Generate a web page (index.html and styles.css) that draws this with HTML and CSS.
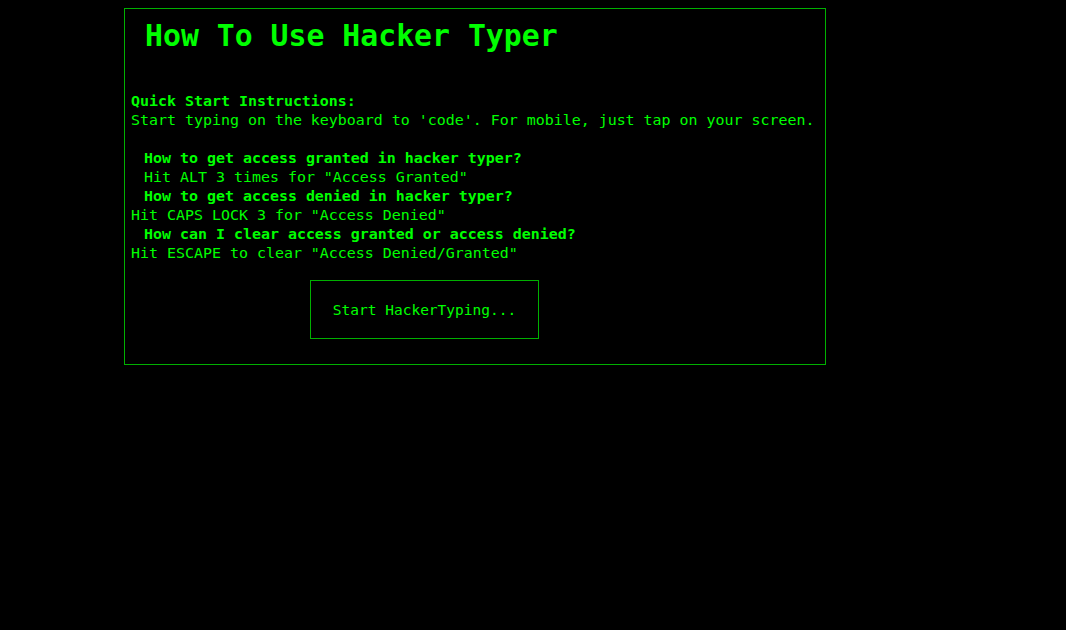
FILE: index.html
```html
<!DOCTYPE html>
<html>
<head>
<meta charset="utf-8">
<link rel="stylesheet" href="styles.css">
</head>
<body>
<div class="page">
  <div class="panel">
    <h1 class="title">How To Use Hacker Typer</h1>
    <div class="instructions">
      <p class="line strong">Quick Start Instructions:</p>
      <p class="line">Start typing on the keyboard to 'code'. For mobile, just tap on your screen.</p>
      <p class="line blank"></p>
      <p class="line strong indent">How to get access granted in hacker typer?</p>
      <p class="line indent">Hit ALT 3 times for "Access Granted"</p>
      <p class="line strong indent">How to get access denied in hacker typer?</p>
      <p class="line">Hit CAPS LOCK 3 for "Access Denied"</p>
      <p class="line strong indent">How can I clear access granted or access denied?</p>
      <p class="line">Hit ESCAPE to clear "Access Denied/Granted"</p>
    </div>
    <div class="actions">
      <button class="start">Start HackerTyping...</button>
    </div>
  </div>
</div>
</body>
</html>
```

FILE: styles.css
```css
html, body {
  margin: 0;
  padding: 0;
  background: #000;
}
body {
  font-family: "DejaVu Sans Mono", "Liberation Mono", monospace;
  color: #00ff00;
}
.page {
  padding: 8px 0 0 124px;
}
.panel {
  width: 688px;
  border: 1px solid #00b000;
  padding: 0 6px 25px 6px;
}
.title {
  margin: 9px 0 0 14px;
  font-size: 29.8px;
  line-height: 35px;
  font-weight: bold;
}
.instructions {
  margin-top: 39px;
}
.line {
  margin: 0;
  font-size: 14.95px;
  line-height: 19px;
  white-space: pre;
}
.blank {
  height: 19px;
}
.strong {
  font-weight: bold;
}
.indent {
  padding-left: 13px;
}
.actions {
  margin-top: 17px;
  padding-left: 179px;
}
.start {
  display: block;
  width: 229px;
  height: 59px;
  background: #000;
  border: 1px solid #00b000;
  color: #00ff00;
  font-family: "DejaVu Sans Mono", "Liberation Mono", monospace;
  font-size: 14.5px;
  padding: 0;
  cursor: pointer;
}
```
